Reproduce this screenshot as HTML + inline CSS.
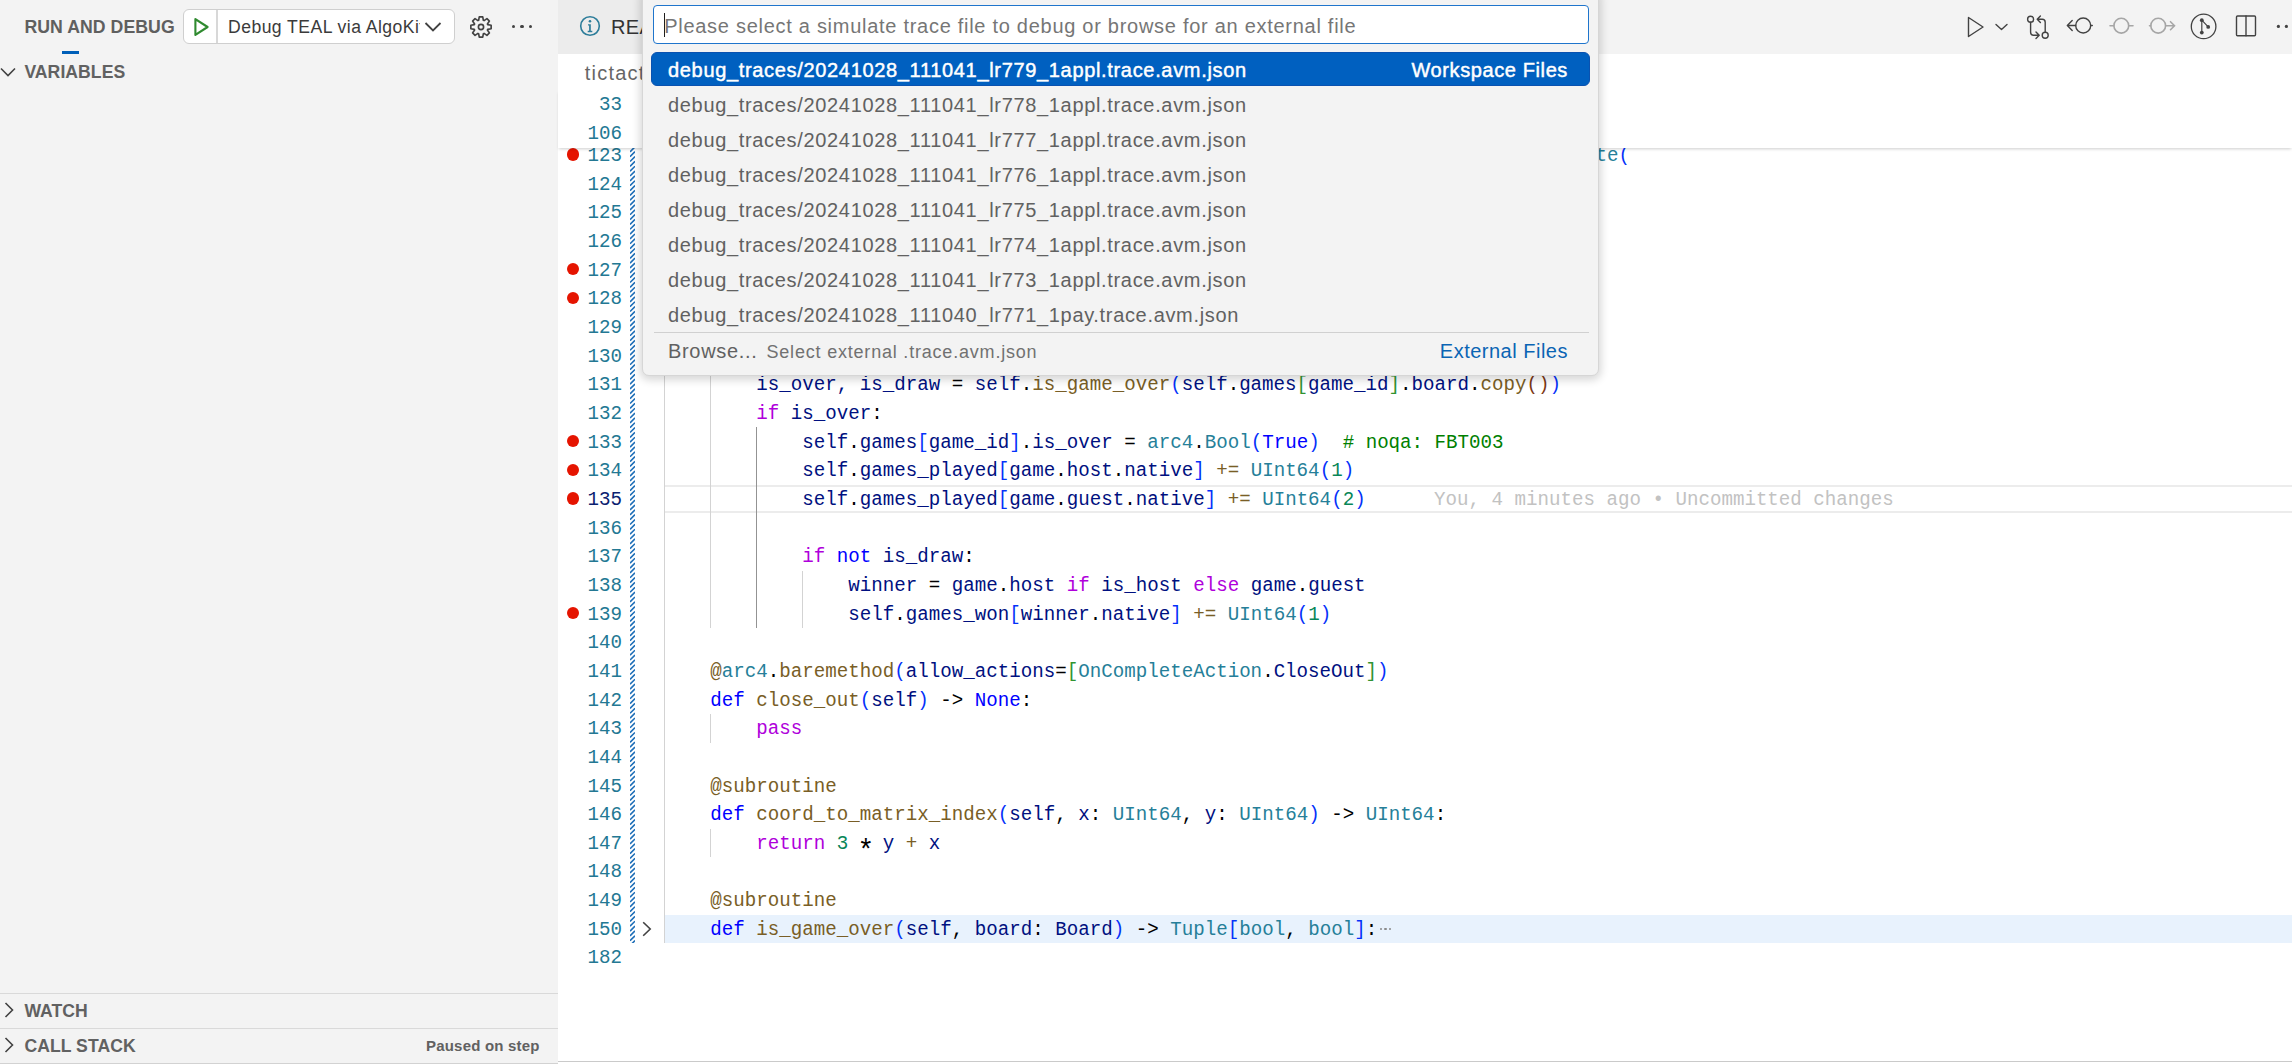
<!DOCTYPE html>
<html><head><meta charset="utf-8"><style>
*{margin:0;padding:0;box-sizing:border-box}
html,body{width:2292px;height:1064px;overflow:hidden;background:#fff}
body{position:relative;font-family:"Liberation Sans",sans-serif;color:#616161}
.a{position:absolute}
.t{position:absolute;white-space:pre;line-height:1}
.code{position:absolute;font-family:"Liberation Mono",monospace;font-size:19.164px;white-space:pre;color:#000;transform-origin:0 19.4px;transform:scaleY(1.05)}
.ln{position:absolute;font-family:"Liberation Mono",monospace;font-size:19.164px;white-space:pre;color:#237893;text-align:right;width:100px;transform-origin:0 19.4px;transform:scaleY(1.09)}
.bp{position:absolute;width:12.4px;height:12.4px;border-radius:50%;background:#e51400}
.g{position:absolute;width:1px;background:#d3d3d3}
</style></head><body>
<div class="a" style="left:0;top:0;width:558px;height:1064px;background:#f3f3f3"></div>
<div class="t" style="left:24.4px;top:18.61px;font-size:17.7px;color:#5f5f5f;font-weight:bold;letter-spacing:0.05px;">RUN AND DEBUG</div>
<div class="a" style="left:62px;top:51px;width:17px;height:3px;background:#005fb8"></div>
<div class="a" style="left:183.2px;top:8.5px;width:272px;height:35.7px;background:#fff;border:1.5px solid #cfcfcf;border-radius:6px"></div>
<div class="a" style="left:216px;top:10px;width:1.5px;height:33px;background:#d8d8d8"></div>
<svg class="a" style="left:190px;top:14px" width="24" height="26" viewBox="0 0 24 26"><path d="M5.4 5.1 L17.6 13 L5.4 20.9 Z" fill="none" stroke="#2f8a2f" stroke-width="2.1" stroke-linejoin="round"/></svg>
<div class="a" style="left:226px;top:8px;width:194px;height:36px;overflow:hidden"><div class="t" style="left:2px;top:10.90px;font-size:17.6px;color:#3b3b3b;font-weight:normal;letter-spacing:0.45px;">Debug TEAL via AlgoKit</div>
</div>
<svg class="a" style="left:422px;top:18px" width="22" height="18" viewBox="0 0 22 18"><path d="M3.5 5 L11 12.5 L18.5 5" fill="none" stroke="#424242" stroke-width="1.8"/></svg>
<svg class="a" style="left:466.8px;top:12.9px" width="28" height="28" viewBox="0 0 28 28"><g fill="none" stroke="#424242" stroke-width="1.65">
<path d="M11.63 7.31 L12.26 3.85 L15.74 3.85 L16.37 7.31 L17.06 7.59 L19.95 5.59 L22.41 8.05 L20.41 10.94 L20.69 11.63 L24.15 12.26 L24.15 15.74 L20.69 16.37 L20.41 17.06 L22.41 19.95 L19.95 22.41 L17.06 20.41 L16.37 20.69 L15.74 24.15 L12.26 24.15 L11.63 20.69 L10.94 20.41 L8.05 22.41 L5.59 19.95 L7.59 17.06 L7.31 16.37 L3.85 15.74 L3.85 12.26 L7.31 11.63 L7.59 10.94 L5.59 8.05 L8.05 5.59 L10.94 7.59Z" stroke-linejoin="round"/>
<circle cx="14" cy="14" r="2.6"/></g></svg>
<div class="a" style="left:511.69999999999993px;top:24.9px;width:3.2px;height:3.2px;border-radius:50%;background:#424242"></div>
<div class="a" style="left:520.4px;top:24.9px;width:3.2px;height:3.2px;border-radius:50%;background:#424242"></div>
<div class="a" style="left:529.0px;top:24.9px;width:3.2px;height:3.2px;border-radius:50%;background:#424242"></div>
<svg class="a" style="left:0;top:64px" width="18" height="16" viewBox="0 0 18 16"><path d="M1 4.5 L8 11.5 L15 4.5" fill="none" stroke="#424242" stroke-width="1.6"/></svg>
<div class="t" style="left:24.4px;top:64.30px;font-size:17.6px;color:#616161;font-weight:bold;letter-spacing:0.05px;">VARIABLES</div>
<div class="a" style="left:0;top:992.5px;width:558px;height:1.5px;background:#d9d9d9"></div>
<svg class="a" style="left:2px;top:1001px" width="14" height="18" viewBox="0 0 14 18"><path d="M3.5 2 L10.5 9 L3.5 16" fill="none" stroke="#424242" stroke-width="1.6"/></svg>
<div class="t" style="left:24.4px;top:1002.60px;font-size:17.6px;color:#616161;font-weight:bold;letter-spacing:0.05px;">WATCH</div>
<div class="a" style="left:0;top:1027.8px;width:558px;height:1.5px;background:#d9d9d9"></div>
<svg class="a" style="left:2px;top:1036px" width="14" height="18" viewBox="0 0 14 18"><path d="M3.5 2 L10.5 9 L3.5 16" fill="none" stroke="#424242" stroke-width="1.6"/></svg>
<div class="t" style="left:24.4px;top:1037.60px;font-size:17.6px;color:#616161;font-weight:bold;letter-spacing:0.05px;">CALL STACK</div>
<div class="t" style="left:426px;top:1037.80px;font-size:15px;color:#616161;font-weight:bold;letter-spacing:0.2px;">Paused on step</div>
<div class="a" style="left:0;top:1062.6px;width:558px;height:1.4px;background:#d2d2d2"></div>
<div class="a" style="left:558px;top:0;width:1734px;height:54px;background:#f3f3f3"></div>
<div class="a" style="left:558px;top:0;width:300px;height:54px;background:#ececec"></div>
<svg class="a" style="left:578px;top:14px" width="24" height="24" viewBox="0 0 24 24"><circle cx="12" cy="12" r="9.3" fill="none" stroke="#2d7d9a" stroke-width="1.6"/><circle cx="12" cy="7.3" r="1.3" fill="#2d7d9a"/><path d="M10 10.2h2.8v6.6h1.5v1.4h-4.6v-1.4h1.4v-5.2h-1.1z" fill="#2d7d9a"/></svg>
<div class="t" style="left:611px;top:17.27px;font-size:20px;color:#333333;font-weight:normal;letter-spacing:0.3px;">README.md</div>
<svg class="a" style="left:1950px;top:0" width="342" height="54" viewBox="1950 0 342 54">
<g fill="none" stroke="#424242" stroke-width="1.4" stroke-linejoin="round" stroke-linecap="round">
<path d="M1968.5 17.5 L1983 27 L1968.5 36.5 Z"/>
<path d="M1996 24.5 L2001.5 29.5 L2007 24.5" stroke-width="1.4"/>
<circle cx="2030.6" cy="19.25" r="3"/><circle cx="2045.2" cy="35.3" r="3"/>
<path d="M2030.6 22.3 V32.3 Q2030.6 35.3 2033.6 35.3 H2039.2 M2036 32.1 L2039.2 35.3 L2036 38.5"/>
<path d="M2045.2 32.3 V22.3 Q2045.2 19.25 2042.2 19.25 H2037.2 M2040.4 16.05 L2037.2 19.25 L2040.4 22.45"/>
<circle cx="2083.2" cy="25.5" r="7.5"/>
<path d="M2090.7 25.5 H2092.3 M2075.7 25.5 H2067.3 M2072.2 20.6 L2067.3 25.5 L2072.2 30.4"/>
<circle cx="2203.6" cy="26.4" r="12.3" stroke-width="1.3"/>
<path d="M2201.8 20.2 V32.6 M2201.8 20.2 L2208.2 26.9" stroke-width="1.2"/>
<rect x="2236.5" y="16" width="19" height="19.8" rx="1"/>
<path d="M2246 16 V35.8"/>
</g>
<g fill="#424242"><circle cx="2201.8" cy="20.2" r="1.9"/><circle cx="2201.8" cy="32.6" r="1.9"/><circle cx="2208.2" cy="26.9" r="1.9"/>
<circle cx="2278.4" cy="26.4" r="1.6"/><circle cx="2286.4" cy="26.4" r="1.6"/></g>
<g fill="none" stroke="#a6a6a6" stroke-width="1.6" stroke-linecap="round">
<circle cx="2121.3" cy="25.7" r="7.4"/><path d="M2110 25.7 H2113.9 M2128.7 25.7 H2133"/>
<circle cx="2158.2" cy="25.7" r="7.4"/><path d="M2149.5 25.7 H2150.8 M2165.6 25.7 H2174.5 M2170.5 21.7 L2174.5 25.7 L2170.5 29.7"/>
</g></svg>
<div class="t" style="left:584.8px;top:62.87px;font-size:20px;color:#666666;font-weight:normal;letter-spacing:1.2px;">tictactoe</div>
<div class="a" style="left:664.3px;top:484.80px;width:1627.7px;height:28.06px;border-top:2.4px solid #ececec;border-bottom:2.4px solid #ececec"></div>
<div class="a" style="left:664.3px;top:914.70px;width:1627.7px;height:28.66px;background:#e8f2fd"></div>
<div class="g" style="left:663.80px;top:169.54px;height:773.82px;background:#d3d3d3"></div>
<div class="g" style="left:709.80px;top:169.54px;height:458.56px;background:#d3d3d3"></div>
<div class="g" style="left:755.80px;top:427.48px;height:200.62px;background:#939393"></div>
<div class="g" style="left:801.80px;top:570.78px;height:57.32px;background:#d3d3d3"></div>
<div class="g" style="left:709.80px;top:714.08px;height:28.66px;background:#d3d3d3"></div>
<div class="g" style="left:709.80px;top:828.72px;height:28.66px;background:#d3d3d3"></div>
<svg class="a" style="left:630px;top:148.2px" width="5" height="795.16" viewBox="0 0 5 795.16"><path d="M0 -1.00L5 -6.00M0 3.84L5 -1.16M0 8.68L5 3.68M0 13.52L5 8.52M0 18.36L5 13.36M0 23.20L5 18.20M0 28.04L5 23.04M0 32.88L5 27.88M0 37.72L5 32.72M0 42.56L5 37.56M0 47.40L5 42.40M0 52.24L5 47.24M0 57.08L5 52.08M0 61.92L5 56.92M0 66.76L5 61.76M0 71.60L5 66.60M0 76.44L5 71.44M0 81.28L5 76.28M0 86.12L5 81.12M0 90.96L5 85.96M0 95.80L5 90.80M0 100.64L5 95.64M0 105.48L5 100.48M0 110.32L5 105.32M0 115.16L5 110.16M0 120.00L5 115.00M0 124.84L5 119.84M0 129.68L5 124.68M0 134.52L5 129.52M0 139.36L5 134.36M0 144.20L5 139.20M0 149.04L5 144.04M0 153.88L5 148.88M0 158.72L5 153.72M0 163.56L5 158.56M0 168.40L5 163.40M0 173.24L5 168.24M0 178.08L5 173.08M0 182.92L5 177.92M0 187.76L5 182.76M0 192.60L5 187.60M0 197.44L5 192.44M0 202.28L5 197.28M0 207.12L5 202.12M0 211.96L5 206.96M0 216.80L5 211.80M0 221.64L5 216.64M0 226.48L5 221.48M0 231.32L5 226.32M0 236.16L5 231.16M0 241.00L5 236.00M0 245.84L5 240.84M0 250.68L5 245.68M0 255.52L5 250.52M0 260.36L5 255.36M0 265.20L5 260.20M0 270.04L5 265.04M0 274.88L5 269.88M0 279.72L5 274.72M0 284.56L5 279.56M0 289.40L5 284.40M0 294.24L5 289.24M0 299.08L5 294.08M0 303.92L5 298.92M0 308.76L5 303.76M0 313.60L5 308.60M0 318.44L5 313.44M0 323.28L5 318.28M0 328.12L5 323.12M0 332.96L5 327.96M0 337.80L5 332.80M0 342.64L5 337.64M0 347.48L5 342.48M0 352.32L5 347.32M0 357.16L5 352.16M0 362.00L5 357.00M0 366.84L5 361.84M0 371.68L5 366.68M0 376.52L5 371.52M0 381.36L5 376.36M0 386.20L5 381.20M0 391.04L5 386.04M0 395.88L5 390.88M0 400.72L5 395.72M0 405.56L5 400.56M0 410.40L5 405.40M0 415.24L5 410.24M0 420.08L5 415.08M0 424.92L5 419.92M0 429.76L5 424.76M0 434.60L5 429.60M0 439.44L5 434.44M0 444.28L5 439.28M0 449.12L5 444.12M0 453.96L5 448.96M0 458.80L5 453.80M0 463.64L5 458.64M0 468.48L5 463.48M0 473.32L5 468.32M0 478.16L5 473.16M0 483.00L5 478.00M0 487.84L5 482.84M0 492.68L5 487.68M0 497.52L5 492.52M0 502.36L5 497.36M0 507.20L5 502.20M0 512.04L5 507.04M0 516.88L5 511.88M0 521.72L5 516.72M0 526.56L5 521.56M0 531.40L5 526.40M0 536.24L5 531.24M0 541.08L5 536.08M0 545.92L5 540.92M0 550.76L5 545.76M0 555.60L5 550.60M0 560.44L5 555.44M0 565.28L5 560.28M0 570.12L5 565.12M0 574.96L5 569.96M0 579.80L5 574.80M0 584.64L5 579.64M0 589.48L5 584.48M0 594.32L5 589.32M0 599.16L5 594.16M0 604.00L5 599.00M0 608.84L5 603.84M0 613.68L5 608.68M0 618.52L5 613.52M0 623.36L5 618.36M0 628.20L5 623.20M0 633.04L5 628.04M0 637.88L5 632.88M0 642.72L5 637.72M0 647.56L5 642.56M0 652.40L5 647.40M0 657.24L5 652.24M0 662.08L5 657.08M0 666.92L5 661.92M0 671.76L5 666.76M0 676.60L5 671.60M0 681.44L5 676.44M0 686.28L5 681.28M0 691.12L5 686.12M0 695.96L5 690.96M0 700.80L5 695.80M0 705.64L5 700.64M0 710.48L5 705.48M0 715.32L5 710.32M0 720.16L5 715.16M0 725.00L5 720.00M0 729.84L5 724.84M0 734.68L5 729.68M0 739.52L5 734.52M0 744.36L5 739.36M0 749.20L5 744.20M0 754.04L5 749.04M0 758.88L5 753.88M0 763.72L5 758.72M0 768.56L5 763.56M0 773.40L5 768.40M0 778.24L5 773.24M0 783.08L5 778.08M0 787.92L5 782.92M0 792.76L5 787.76M0 797.60L5 792.60M0 802.44L5 797.44" stroke="#1f6fb8" stroke-width="1.6" fill="none"/></svg>
<div class="code" style="left:664.3px;top:141.98px;line-height:28.66px;height:28.66px">                                                                                 <span style="color:#267f99">te</span><span style="color:#0431fa">(</span></div>
<div class="ln" style="left:522px;top:141.98px;line-height:28.66px;color:#237893">123</div>
<div class="bp" style="left:566.6999999999999px;top:148.31px"></div>
<div class="ln" style="left:522px;top:170.64px;line-height:28.66px;color:#237893">124</div>
<div class="ln" style="left:522px;top:199.30px;line-height:28.66px;color:#237893">125</div>
<div class="ln" style="left:522px;top:227.96px;line-height:28.66px;color:#237893">126</div>
<div class="ln" style="left:522px;top:256.62px;line-height:28.66px;color:#237893">127</div>
<div class="bp" style="left:566.6999999999999px;top:262.95px"></div>
<div class="ln" style="left:522px;top:285.28px;line-height:28.66px;color:#237893">128</div>
<div class="bp" style="left:566.6999999999999px;top:291.61px"></div>
<div class="ln" style="left:522px;top:313.94px;line-height:28.66px;color:#237893">129</div>
<div class="ln" style="left:522px;top:342.60px;line-height:28.66px;color:#237893">130</div>
<div class="code" style="left:664.3px;top:371.26px;line-height:28.66px;height:28.66px">        <span style="color:#001080">is_over, is_draw</span> = <span style="color:#001080">self</span>.<span style="color:#795e26">is_game_over</span><span style="color:#0431fa">(</span><span style="color:#001080">self</span>.<span style="color:#001080">games</span><span style="color:#319331">[</span><span style="color:#001080">game_id</span><span style="color:#319331">]</span>.<span style="color:#001080">board</span>.<span style="color:#795e26">copy</span><span style="color:#7b3814">()</span><span style="color:#0431fa">)</span></div>
<div class="ln" style="left:522px;top:371.26px;line-height:28.66px;color:#237893">131</div>
<div class="code" style="left:664.3px;top:399.92px;line-height:28.66px;height:28.66px">        <span style="color:#af00db">if</span> <span style="color:#001080">is_over</span>:</div>
<div class="ln" style="left:522px;top:399.92px;line-height:28.66px;color:#237893">132</div>
<div class="code" style="left:664.3px;top:428.58px;line-height:28.66px;height:28.66px">            <span style="color:#001080">self</span>.<span style="color:#001080">games</span><span style="color:#0431fa">[</span><span style="color:#001080">game_id</span><span style="color:#0431fa">]</span>.<span style="color:#001080">is_over</span> = <span style="color:#267f99">arc4</span>.<span style="color:#267f99">Bool</span><span style="color:#0431fa">(</span><span style="color:#0000ff">True</span><span style="color:#0431fa">)</span>  <span style="color:#008000"># noqa: FBT003</span></div>
<div class="ln" style="left:522px;top:428.58px;line-height:28.66px;color:#237893">133</div>
<div class="bp" style="left:566.6999999999999px;top:434.91px"></div>
<div class="code" style="left:664.3px;top:457.24px;line-height:28.66px;height:28.66px">            <span style="color:#001080">self</span>.<span style="color:#001080">games_played</span><span style="color:#0431fa">[</span><span style="color:#001080">game</span>.<span style="color:#001080">host</span>.<span style="color:#001080">native</span><span style="color:#0431fa">]</span> <span style="color:#795e26">+=</span> <span style="color:#267f99">UInt64</span><span style="color:#0431fa">(</span><span style="color:#098658">1</span><span style="color:#0431fa">)</span></div>
<div class="ln" style="left:522px;top:457.24px;line-height:28.66px;color:#237893">134</div>
<div class="bp" style="left:566.6999999999999px;top:463.57px"></div>
<div class="code" style="left:664.3px;top:485.90px;line-height:28.66px;height:28.66px">            <span style="color:#001080">self</span>.<span style="color:#001080">games_played</span><span style="color:#0431fa">[</span><span style="color:#001080">game</span>.<span style="color:#001080">guest</span>.<span style="color:#001080">native</span><span style="color:#0431fa">]</span> <span style="color:#795e26">+=</span> <span style="color:#267f99">UInt64</span><span style="color:#0431fa">(</span><span style="color:#098658">2</span><span style="color:#0431fa">)</span></div>
<div class="ln" style="left:522px;top:485.90px;line-height:28.66px;color:#0b216f">135</div>
<div class="bp" style="left:566.6999999999999px;top:492.23px"></div>
<div class="ln" style="left:522px;top:514.56px;line-height:28.66px;color:#237893">136</div>
<div class="code" style="left:664.3px;top:543.22px;line-height:28.66px;height:28.66px">            <span style="color:#af00db">if</span> <span style="color:#0000ff">not</span> <span style="color:#001080">is_draw</span>:</div>
<div class="ln" style="left:522px;top:543.22px;line-height:28.66px;color:#237893">137</div>
<div class="code" style="left:664.3px;top:571.88px;line-height:28.66px;height:28.66px">                <span style="color:#001080">winner</span> = <span style="color:#001080">game</span>.<span style="color:#001080">host</span> <span style="color:#af00db">if</span> <span style="color:#001080">is_host</span> <span style="color:#af00db">else</span> <span style="color:#001080">game</span>.<span style="color:#001080">guest</span></div>
<div class="ln" style="left:522px;top:571.88px;line-height:28.66px;color:#237893">138</div>
<div class="code" style="left:664.3px;top:600.54px;line-height:28.66px;height:28.66px">                <span style="color:#001080">self</span>.<span style="color:#001080">games_won</span><span style="color:#0431fa">[</span><span style="color:#001080">winner</span>.<span style="color:#001080">native</span><span style="color:#0431fa">]</span> <span style="color:#795e26">+=</span> <span style="color:#267f99">UInt64</span><span style="color:#0431fa">(</span><span style="color:#098658">1</span><span style="color:#0431fa">)</span></div>
<div class="ln" style="left:522px;top:600.54px;line-height:28.66px;color:#237893">139</div>
<div class="bp" style="left:566.6999999999999px;top:606.87px"></div>
<div class="ln" style="left:522px;top:629.20px;line-height:28.66px;color:#237893">140</div>
<div class="code" style="left:664.3px;top:657.86px;line-height:28.66px;height:28.66px">    <span style="color:#795e26">@</span><span style="color:#267f99">arc4</span>.<span style="color:#795e26">baremethod</span><span style="color:#0431fa">(</span><span style="color:#001080">allow_actions</span>=<span style="color:#319331">[</span><span style="color:#267f99">OnCompleteAction</span>.<span style="color:#001080">CloseOut</span><span style="color:#319331">]</span><span style="color:#0431fa">)</span></div>
<div class="ln" style="left:522px;top:657.86px;line-height:28.66px;color:#237893">141</div>
<div class="code" style="left:664.3px;top:686.52px;line-height:28.66px;height:28.66px">    <span style="color:#0000ff">def</span> <span style="color:#795e26">close_out</span><span style="color:#0431fa">(</span><span style="color:#001080">self</span><span style="color:#0431fa">)</span> -&gt; <span style="color:#0000ff">None</span>:</div>
<div class="ln" style="left:522px;top:686.52px;line-height:28.66px;color:#237893">142</div>
<div class="code" style="left:664.3px;top:715.18px;line-height:28.66px;height:28.66px">        <span style="color:#af00db">pass</span></div>
<div class="ln" style="left:522px;top:715.18px;line-height:28.66px;color:#237893">143</div>
<div class="ln" style="left:522px;top:743.84px;line-height:28.66px;color:#237893">144</div>
<div class="code" style="left:664.3px;top:772.50px;line-height:28.66px;height:28.66px">    <span style="color:#795e26">@subroutine</span></div>
<div class="ln" style="left:522px;top:772.50px;line-height:28.66px;color:#237893">145</div>
<div class="code" style="left:664.3px;top:801.16px;line-height:28.66px;height:28.66px">    <span style="color:#0000ff">def</span> <span style="color:#795e26">coord_to_matrix_index</span><span style="color:#0431fa">(</span><span style="color:#001080">self</span>, <span style="color:#001080">x</span>: <span style="color:#267f99">UInt64</span>, <span style="color:#001080">y</span>: <span style="color:#267f99">UInt64</span><span style="color:#0431fa">)</span> -&gt; <span style="color:#267f99">UInt64</span>:</div>
<div class="ln" style="left:522px;top:801.16px;line-height:28.66px;color:#237893">146</div>
<div class="code" style="left:664.3px;top:829.82px;line-height:28.66px;height:28.66px">        <span style="color:#af00db">return</span> <span style="color:#098658">3</span> <span style="display:inline-block;transform:translateY(8.8px) scale(1.45)">*</span> <span style="color:#001080">y</span> <span style="color:#795e26">+</span> <span style="color:#001080">x</span></div>
<div class="ln" style="left:522px;top:829.82px;line-height:28.66px;color:#237893">147</div>
<div class="ln" style="left:522px;top:858.48px;line-height:28.66px;color:#237893">148</div>
<div class="code" style="left:664.3px;top:887.14px;line-height:28.66px;height:28.66px">    <span style="color:#795e26">@subroutine</span></div>
<div class="ln" style="left:522px;top:887.14px;line-height:28.66px;color:#237893">149</div>
<div class="code" style="left:664.3px;top:915.80px;line-height:28.66px;height:28.66px">    <span style="color:#0000ff">def</span> <span style="color:#795e26">is_game_over</span><span style="color:#0431fa">(</span><span style="color:#001080">self</span>, <span style="color:#001080">board</span>: <span style="color:#001080">Board</span><span style="color:#0431fa">)</span> -&gt; <span style="color:#267f99">Tuple</span><span style="color:#0431fa">[</span><span style="color:#267f99">bool</span>, <span style="color:#267f99">bool</span><span style="color:#0431fa">]</span>:</div>
<div class="ln" style="left:522px;top:915.80px;line-height:28.66px;color:#237893">150</div>
<div class="ln" style="left:522px;top:944.46px;line-height:28.66px;color:#237893">182</div>
<div class="code" style="left:1434px;top:485.90px;line-height:28.66px;color:#c2c2c2">You, 4 minutes ago • Uncommitted changes</div>
<div class="a" style="left:1380.00px;top:928.10px;width:2.4px;height:2.4px;border-radius:50%;background:#8a8a8a"></div>
<div class="a" style="left:1384.40px;top:928.10px;width:2.4px;height:2.4px;border-radius:50%;background:#8a8a8a"></div>
<div class="a" style="left:1388.80px;top:928.10px;width:2.4px;height:2.4px;border-radius:50%;background:#8a8a8a"></div>
<svg class="a" style="left:640px;top:918.70px" width="14" height="20" viewBox="0 0 14 20"><path d="M3.2 3.2 L10.2 10 L3.2 16.8" fill="none" stroke="#424242" stroke-width="1.6"/></svg>
<div class="a" style="left:558px;top:90px;width:1734px;height:58.4px;background:#fff;box-shadow:0 2px 3px -1px rgba(0,0,0,0.2)"></div>
<div class="ln" style="left:522px;top:90.90px;line-height:28.66px">33</div>
<div class="ln" style="left:522px;top:119.56px;line-height:28.66px">106</div>
<div class="a" style="left:558px;top:1061px;width:1734px;height:1.2px;background:#cacaca"></div>
<div class="a" style="left:641.9px;top:-10px;width:957.1px;height:385.7px;background:#f3f3f3;border:1px solid #d6d6d6;border-radius:7px;box-shadow:0 2px 9px 2px rgba(0,0,0,0.16)"></div>
<div class="a" style="left:652.5px;top:5.2px;width:936.2px;height:39px;background:#fff;border:1.6px solid #1f75cc;border-radius:4px"></div>
<div class="a" style="left:663.6px;top:13px;width:1.5px;height:24px;background:#1e1e1e"></div>
<div class="t" style="left:664.2px;top:15.67px;font-size:20px;color:#767676;font-weight:normal;letter-spacing:0.72px;">Please select a simulate trace file to debug or browse for an external file</div>
<div class="a" style="left:650.9px;top:51.5px;width:938.9px;height:34.2px;background:#0060c0;border:1px solid #0a52b0;border-radius:6px"></div>
<div class="t" style="left:668px;top:59.87px;font-size:20px;color:#ffffff;font-weight:normal;letter-spacing:0.67px;-webkit-text-stroke:0.45px #fff;">debug_traces/20241028_111041_lr779_1appl.trace.avm.json</div>
<div class="t" style="left:668px;top:94.87px;font-size:20px;color:#616161;font-weight:normal;letter-spacing:0.67px;">debug_traces/20241028_111041_lr778_1appl.trace.avm.json</div>
<div class="t" style="left:668px;top:129.87px;font-size:20px;color:#616161;font-weight:normal;letter-spacing:0.67px;">debug_traces/20241028_111041_lr777_1appl.trace.avm.json</div>
<div class="t" style="left:668px;top:164.87px;font-size:20px;color:#616161;font-weight:normal;letter-spacing:0.67px;">debug_traces/20241028_111041_lr776_1appl.trace.avm.json</div>
<div class="t" style="left:668px;top:199.87px;font-size:20px;color:#616161;font-weight:normal;letter-spacing:0.67px;">debug_traces/20241028_111041_lr775_1appl.trace.avm.json</div>
<div class="t" style="left:668px;top:234.87px;font-size:20px;color:#616161;font-weight:normal;letter-spacing:0.67px;">debug_traces/20241028_111041_lr774_1appl.trace.avm.json</div>
<div class="t" style="left:668px;top:269.87px;font-size:20px;color:#616161;font-weight:normal;letter-spacing:0.67px;">debug_traces/20241028_111041_lr773_1appl.trace.avm.json</div>
<div class="t" style="left:668px;top:304.87px;font-size:20px;color:#616161;font-weight:normal;letter-spacing:0.67px;">debug_traces/20241028_111040_lr771_1pay.trace.avm.json</div>
<div class="t" style="left:1411.5px;top:59.87px;font-size:20px;color:#ffffff;font-weight:normal;letter-spacing:0.6px;-webkit-text-stroke:0.45px #fff;">Workspace Files</div>
<div class="a" style="left:653.5px;top:332px;width:935px;height:1px;background:#d0d0d0"></div>
<div class="t" style="left:668px;top:340.87px;font-size:20px;color:#616161;font-weight:normal;letter-spacing:0.67px;">Browse...</div>
<div class="t" style="left:766.5px;top:343.36px;font-size:18px;color:#717171;font-weight:normal;letter-spacing:0.8px;">Select external .trace.avm.json</div>
<div class="t" style="left:1439.8px;top:340.87px;font-size:20px;color:#0a64b4;font-weight:normal;letter-spacing:0.5px;">External Files</div>
</body></html>
